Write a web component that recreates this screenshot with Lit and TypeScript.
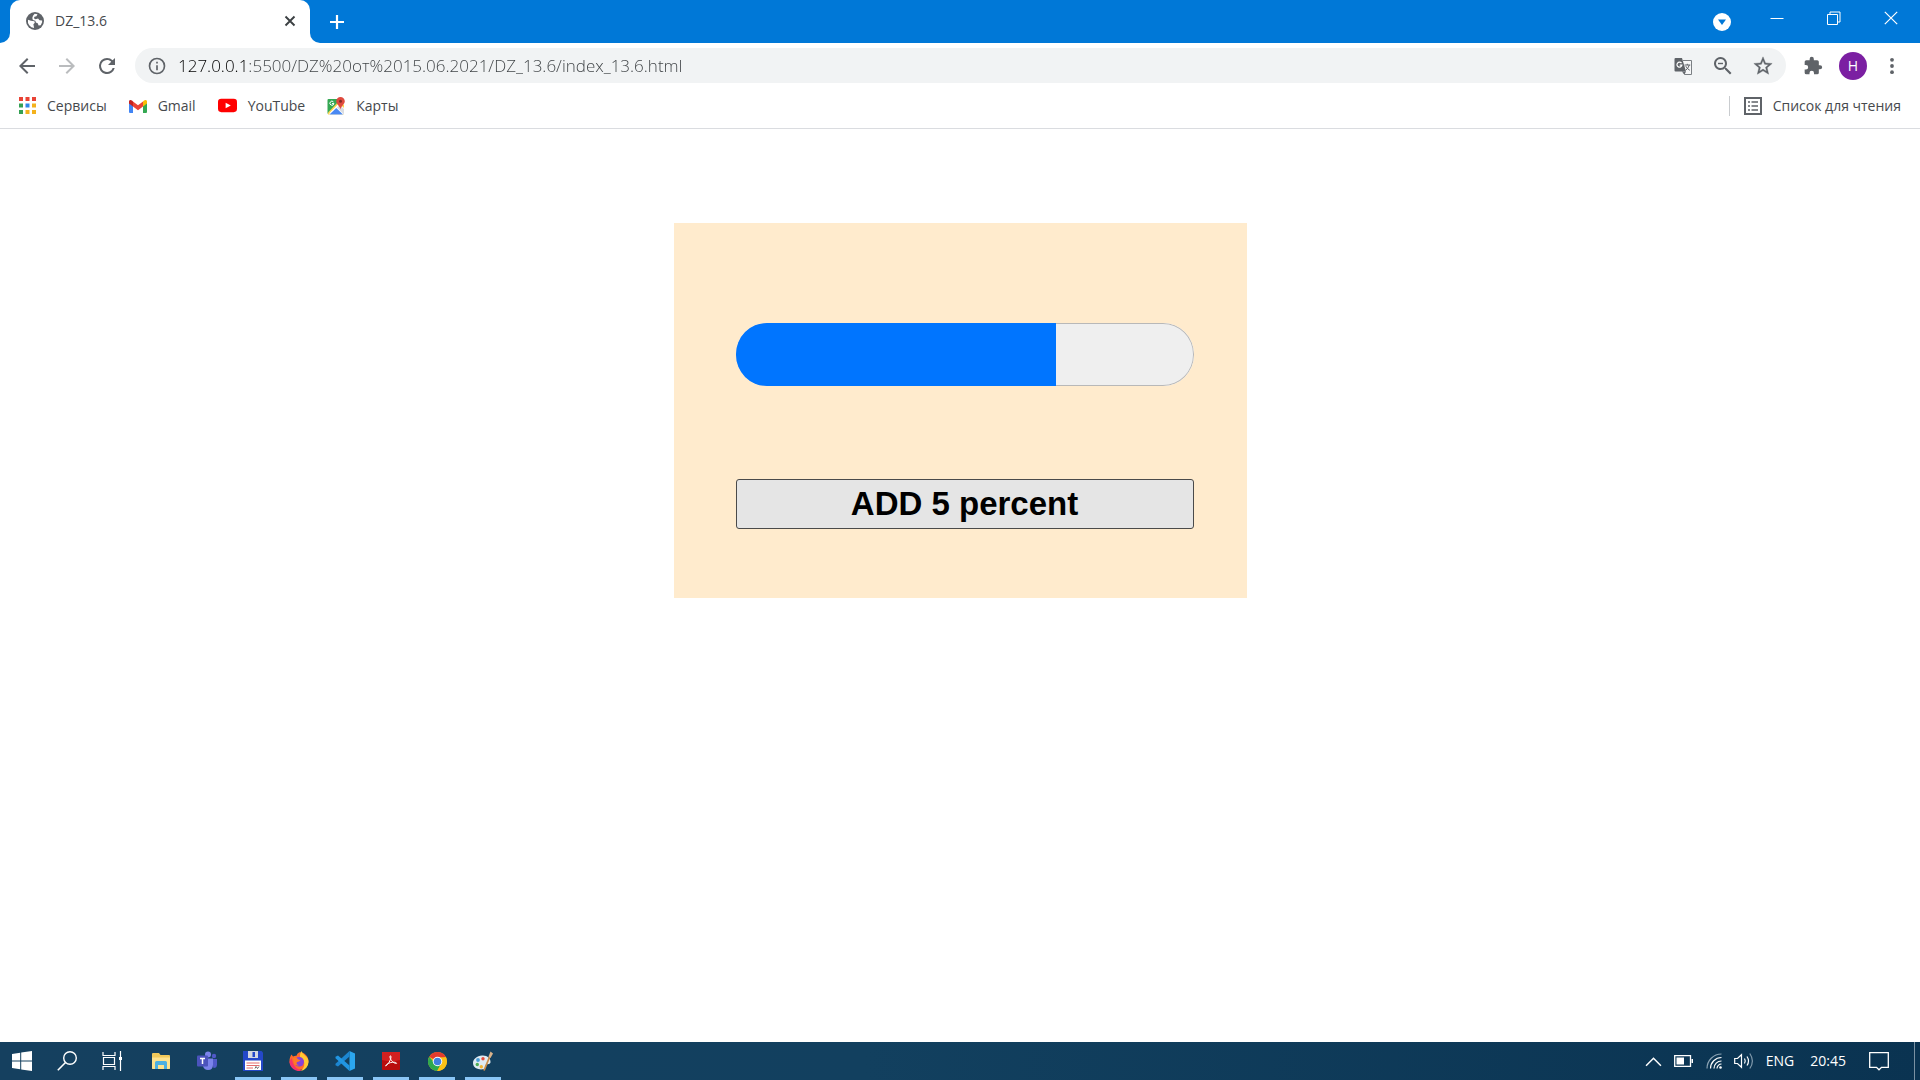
import { LitElement, html, css, svg, TemplateResult } from "lit";
import { customElement, state } from "lit/decorators.js";

const icon = (size: number, box: number, body: TemplateResult) =>
  html`<svg width=${size} height=${size} viewBox="0 0 ${box} ${box}" aria-hidden="true">${body}</svg>`;

const globe = svg`<circle cx="10" cy="10" r="10" fill="#5f6368"/>
  <path d="M2.200 8.500 5.500 9.600 9.300 10.400 9.800 12 8.200 13.600 9 17.900A8 8 0 0 1 2.200 8.500ZM9.600 2 12.800 2.600 11.600 4.600 9.400 5.200 8.800 7 10.600 8 13.400 7.200 15 9.200 17.900 9.400 17.900 11.400 16.400 14.800 14 15 13 12.600 11 11.800 10.400 9.800 7.600 9 7 6.800 7.800 4.200Z" fill="#fff"/>`;
const cross = svg`<path d="M1.500 1.500 10.500 10.500M10.500 1.500 1.500 10.500" stroke="#3c4043" stroke-width="1.900" fill="none"/>`;
const plus = svg`<path d="M8 1V15M1 8H15" stroke="#fff" stroke-width="2.200"/>`;
const back = svg`<path d="M20 11H7.830l5.590-5.590L12 4l-8 8 8 8 1.410-1.410L7.830 13H20v-2z" fill="#5f6368"/>`;
const forward = svg`<path d="M12 4l-1.410 1.410L16.170 11H4v2h12.170l-5.580 5.590L12 20l8-8z" fill="#babcbe"/>`;
const reload = svg`<path d="M17.650 6.350A7.960 7.960 0 0 0 12 4a8 8 0 1 0 7.730 10h-2.080A6 6 0 1 1 12 6c1.660 0 3.140.690 4.220 1.780L13 11h7V4l-2.350 2.350z" fill="#5f6368"/>`;
const info = svg`<path d="M11 17h2v-6h-2v6zm0-8h2V7h-2v2zm1-7a10 10 0 1 0 0 20 10 10 0 0 0 0-20zm0 18a8 8 0 1 1 0-16 8 8 0 0 1 0 16z" fill="#5f6368"/>`;
const translate = svg`<path d="M9 3.500H17.500V17.500H10.500L8.500 14.500" fill="#f6f7f8" stroke="#7b7f83" stroke-width="1"/>
  <path d="M1.500 1H8L12 14.500H1.500Q.5 14.500.5 13.500V2Q.5 1 1.500 1Z" fill="#5f6368"/><path d="M8.500 14.500H12L10.500 17.500Z" fill="#5f6368"/>
  <path d="M7.500 6.200A2.500 2.500 0 1 0 7.900 8.200H5.700" fill="none" stroke="#fff" stroke-width="1.200"/>
  <path d="M10.500 8H16.300M13.300 6.800V8M15.300 8Q14.500 11 11.800 13.200M11.800 9.200Q13 11.700 15.800 13.300" fill="none" stroke="#5f6368" stroke-width="1"/>`;
const zoomOut = svg`<path d="M15.500 14h-.790l-.280-.270A6.500 6.500 0 1 0 13.730 14.430l.270.280v.790l5 4.990L20.490 19l-4.990-5zM9.500 14a4.500 4.500 0 1 1 0-9 4.500 4.500 0 0 1 0 9z" fill="#5f6368"/><path d="M7 8.800H12V10.200H7Z" fill="#5f6368"/>`;
const star = svg`<path d="M22 9.240l-7.190-.620L12 2 9.190 8.630 2 9.240l5.460 4.730L5.820 21 12 17.270 18.180 21l-1.630-7.030L22 9.240zM12 15.400l-3.760 2.270 1-4.280-3.320-2.880 4.380-.380L12 6.100l1.710 4.040 4.380.380-3.320 2.880 1 4.280L12 15.400z" fill="#5f6368" stroke="#5f6368" stroke-width=".4"/>`;
const puzzle = svg`<path d="M20.500 11H19V7a2 2 0 0 0-2-2h-4V3.500a2.500 2.500 0 0 0-5 0V5H4a2 2 0 0 0-1.990 2v3.800H3.500a2.700 2.700 0 0 1 0 5.400H2V20a2 2 0 0 0 2 2h3.800v-1.500a2.700 2.700 0 0 1 5.400 0V22H17a2 2 0 0 0 2-2v-4h1.500a2.500 2.500 0 0 0 0-5z" fill="#5f6368"/>`;
const dots = svg`<g fill="#5f6368"><circle cx="10" cy="3.800" r="1.900"/><circle cx="10" cy="10" r="1.900"/><circle cx="10" cy="16.200" r="1.900"/></g>`;
const guest = svg`<circle cx="9" cy="9" r="9" fill="#fff"/><path d="M5 6.500H13L9 12Z" fill="#0078d7"/>`;
const minimize = svg`<path d="M.5 7.500H13.500" stroke="#fff"/>`;
const restore = svg`<path d="M.5 3.500H10.500V13.500H.5ZM3 3.500V1H13V11H10.500" fill="none" stroke="#fff"/>`;
const closeWin = svg`<path d="M.8.8 13.200 13.200M13.200.8.8 13.200" stroke="#fff" stroke-width="1.200"/>`;
const apps = svg`<path d="M0 0H4V4H0ZM6.500 0H10.500V4H6.500ZM13 0H17V4H13Z" fill="#e94335"/><path d="M0 6.500H4V10.500H0ZM0 13H4V17H0Z" fill="#34a053"/><path d="M6.500 6.500H10.500V10.500H6.500Z" fill="#2f87e8"/><path d="M13 6.500H17V10.500H13ZM6.500 13H10.500V17H6.500ZM13 13H17V17H13Z" fill="#f4b21c"/>`;
const gmail = svg`<path d="M0 5V15Q0 16 1 16H4V8Z" fill="#4285f4"/><path d="M18 5V15Q18 16 17 16H14V8Z" fill="#34a853"/><path d="M4 4.500 9 8.300 14 4.500V9.500L9 13.200 4 9.500Z" fill="#ea4335"/><path d="M0 6V4.500C0 2.700 1.800 2.500 3 3.600L4 4.500V9.500L0 6.500Z" fill="#c5221f"/><path d="M18 6.500V4.500C18 2.700 16.200 2.500 15 3.600L14 4.500V9.500Z" fill="#fbbc04"/>`;
const youtube = svg`<rect x="0" y="3" width="20" height="14" rx="3.500" fill="#f00"/><path d="M8 7 13.500 10 8 13Z" fill="#fff"/>`;
const maps = svg`<path d="M1.500 2H16V17H1.500Q.5 17 .5 16V3Q.5 2 1.500 2Z" fill="#34a853"/><path d="M1 15.500 12.500 3.500 17 8V17.500H1Z" fill="#fdd24b"/><path d="M2.500 16 12 6.300 17 11V17.500H2.500Z" fill="#fff"/><path d="M10 10.500 12.500 8 17 12V17.500Z" fill="#dadce0"/><path d="M2.500 17.500 9.300 11 16 17.500Z" fill="#4a89f3"/><path d="M6.500 5A2 2 0 1 0 6.900 6.500H5" fill="none" stroke="#fff" stroke-width="1"/>
  <path d="M13.500 0A4.300 4.300 0 0 1 17.800 4.300C17.800 7.300 14.300 8.500 13.500 12.500 12.700 8.500 9.200 7.300 9.200 4.300A4.300 4.300 0 0 1 13.500 0Z" fill="#df4a3e"/><circle cx="13.500" cy="4.200" r="1.500" fill="#822b26"/>`;
const reading = svg`<rect x="1" y="1" width="16" height="16" fill="none" stroke="#5f6368" stroke-width="2"/><path d="M4 5H6M4 9H6M4 13H6M7.500 5H14M7.500 9H14M7.500 13H14" stroke="#5f6368" stroke-width="1.700"/>`;

const windows = svg`<path d="M0 2.900 8.200 1.800V9.500H0ZM9.200 1.600 20 0V9.500H9.200ZM0 10.500H8.200V18.200L0 17.100ZM9.200 10.500H20V20L9.200 18.400Z" fill="#fff"/>`;
const search = svg`<circle cx="13" cy="7" r="6.300" fill="none" stroke="#fff" stroke-width="1.400"/><path d="M8.500 11.500.8 19.300" stroke="#fff" stroke-width="1.600"/>`;
const taskView = svg`<path d="M1 1V4.500H13V1M1 19V15.500H13V19M1.500 6.500H12.500V13.500H1.500ZM18.500 0V20" fill="none" stroke="#fff" stroke-width="1.200"/><path d="M17 6H20V9H17Z" fill="#fff"/>`;
const explorer = svg`<path d="M1 3Q1 2 2 2H8L9.500 4H18Q19 4 19 5V17Q19 18 18 18H2Q1 18 1 17Z" fill="#f1c95b"/><path d="M1 6.500H19V17Q19 18 18 18H2Q1 18 1 17Z" fill="#fde28e"/><path d="M4 18V11.500Q4 10 5.500 10H14.500Q16 10 16 11.500V18H13V14H7V18Z" fill="#4cb0e2"/>`;
const teams = svg`<circle cx="17" cy="5" r="2.200" fill="#5059c9"/><circle cx="11" cy="3.500" r="3" fill="#7b83eb"/><path d="M14 8H20V13.500Q20 17 16.500 17Z" fill="#5059c9"/><path d="M7 7.500H16V13.500Q16 19 11 19 7 19 6 15Z" fill="#7b83eb"/><rect x="0" y="4.500" width="11" height="11" rx="1" fill="#4b53bc"/><path d="M3 7.500H8M5.500 7.500V13" stroke="#fff" stroke-width="1.500"/>`;
const floppy = svg`<path d="M0 0H18.500L20 1.500V20H0Z" fill="#2448c9"/><path d="M5 0H15V7H5Z" fill="#d4d8e0"/><path d="M9.500 1H12V6H9.500Z" fill="#2448c9"/><path d="M2 9.500H18V19H2Z" fill="#fff"/><path d="M3.500 12H16.500M3.500 14.500H16.500M3.500 17H10" stroke="#e26d6d" stroke-width="1"/><path d="M12 17.500 13 15.500 14.500 17.500 16 15.500" stroke="#444" stroke-width=".8" fill="none"/>`;
const firefox = svg`<path d="M10 1.500C14 0 20 5 19.500 11A9.600 9.300 0 0 1 .5 11C.3 7.500 1.500 5 2.500 3.500L4 5.500Q6 4.500 7.500 4.800 8 2.500 10 1.500Z" fill="#ff6a2b"/><path d="M12.500 0Q13 2.500 16 4.500C18.500 6.500 19.500 8 19.500 11A9.600 9.300 0 0 1 12 20Q17 15 14.500 9 13 6.500 11 6Q10.500 3 12.500 0Z" fill="#ffc931"/><path d="M.5 11A9.600 9.300 0 0 0 13 19.600Q6 18 4 12L2.500 7Z" fill="#f5326b"/><circle cx="10.200" cy="10.800" r="4.800" fill="#8542d8"/><path d="M4 7Q7 5.500 9.500 8.500L11.500 9Q10.500 11 8 11 6.500 13.500 10 14 7 15.500 5 12.500Z" fill="#ff7a25"/>`;
const vscode = svg`<path d="M14.500 0 20 2.500V17.500L14.500 20Z" fill="#2ba7f0"/><path d="M14.500 0V5.500L3 15.500.5 14.200V12.800Z" fill="#1c86d1"/><path d="M14.500 20V14.500L3 4.500.5 5.800V7.200Z" fill="#2196e3"/>`;
const acrobat = svg`<rect width="20" height="20" rx="1" fill="#b90d0d"/><path d="M0 0H20V9Q10 12 0 9Z" fill="#d32020"/><path d="M4 15.500C6.500 14.500 9.800 9 10 5.500 10 3.800 8.600 3.800 8.800 5.500 9.200 9 13 12.800 16 12.800 17 12 14 11 11.500 11.400 8.500 11.800 5 13 4 15.500Z" fill="none" stroke="#fff" stroke-width="1.100"/>`;
const chrome = svg`<circle cx="10" cy="10" r="10" fill="#fbc116"/><path d="M10 10 1.340 5A10 10 0 0 1 18.660 5Z" fill="#e33b2e"/><path d="M10 10H5.500L1.340 5A10 10 0 0 0 9.500 20L14 12Z" fill="#2da94f"/><path d="M10 5.500H18.900A10 10 0 0 1 10 20L14 12Z" fill="#fbc116"/><circle cx="10" cy="10" r="5" fill="#fff"/><circle cx="10" cy="10" r="4" fill="#3f7fe0"/>`;
const paint = svg`<path d="M9 4.500C14 4 18 7.500 17.500 11.500 17 13.500 15 13 13.500 13.300 12 14 13.500 16 12 17.500 9 19.500 0 18.500 0 12 0 8 4 5 9 4.500Z" fill="#e0ebf2"/><circle cx="5" cy="9" r="1.900" fill="#4c9fd8"/><circle cx="4.300" cy="13.500" r="1.700" fill="#4fae54"/><circle cx="10" cy="7.800" r="1.700" fill="#e44b3a"/><circle cx="8.300" cy="15.800" r="1.700" fill="#f0b330"/><path d="M17 5 11 19.500" stroke="#c98d4b" stroke-width="1.800"/><path d="M15.500 5.500 17.500.5 20 2.500 17.500 7Z" fill="#d9b28a"/>`;

const chevron = svg`<path d="M1 12 8 5 15 12" fill="none" stroke="#fff" stroke-width="1.400"/>`;
const battery = svg`<path d="M.7 4.700H16.500V15.300H.7Z" fill="none" stroke="#fff" stroke-width="1.300"/><path d="M2.500 6.500H10V13.500H2.500ZM17.500 8H19V12H17.500Z" fill="#fff"/>`;
const wifi = svg`<g fill="none" stroke-width="1.200"><path d="M1 15.500A14.500 14.500 0 0 1 15.500 1" stroke="#8ba3b4"/><path d="M4.500 15.500A11 11 0 0 1 15.500 4.500M8 15.500A7.500 7.500 0 0 1 15.500 8M11 15.500A4.500 4.500 0 0 1 15.500 11" stroke="#fff"/></g><circle cx="14.500" cy="14.500" r="1.300" fill="#fff"/>`;
const volume = svg`<g fill="none" stroke="#fff" stroke-width="1.200"><path d="M.7 7.500H3.500L7.500 3.700V16.300L3.500 12.500H.7Z"/><path d="M10.500 7.500Q12 10 10.500 12.500M13 5.500Q16 10 13 14.500"/><path d="M15.800 2.500Q21 10 15.800 17.500" stroke="#8099ab"/></g>`;
const notice = svg`<path d="M.7 1.700H19.300V16.300H12.500L10 18.800 7.500 16.300H.7Z" fill="none" stroke="#fff" stroke-width="1.300"/>`;

@customElement("progress-card")
export class ProgressCard extends LitElement {
  @state() private value = 70;

  static styles = css`
    :host { display: block; }
    .card {
      box-sizing: border-box;
      display: grid;
      row-gap: 93px;
      max-width: 573px;
      margin: 0 auto;
      padding: 100px 53px 69px 62px;
      background: #ffebcd;
    }
    .meter {
      appearance: none;
      box-sizing: border-box;
      display: block;
      width: 100%;
      height: 63px;
      border: 0;
      border-radius: 31px;
      overflow: hidden;
      background: #efefef;
    }
    .meter::-webkit-progress-bar { background: #efefef; border-radius: 31px; box-shadow: inset 0 0 0 1px #b8b8b8; }
    .meter::-webkit-progress-value { background: #0075ff; }
    .add {
      box-sizing: border-box;
      width: 100%;
      height: 50px;
      padding: 0;
      border: 1px solid #4a4a4a;
      border-radius: 3px;
      background: #e5e5e5;
      color: #000;
      font: bold 33px/38px "Liberation Sans", Arial, sans-serif;
    }
  `;

  private add() {
    this.value = Math.min(100, this.value + 5);
  }

  render() {
    return html`<section class="card">
      <progress class="meter" max="100" .value=${this.value} aria-label="percent"></progress>
      <button class="add" @click=${this.add}>ADD 5 percent</button>
    </section>`;
  }
}

@customElement("browser-chrome")
export class BrowserChrome extends LitElement {
  static styles = css`
    :host { display: block; color: #46494d; font: 14px/20px "Open Sans", "Noto Sans", sans-serif; }
    button, a { display: flex; align-items: center; justify-content: center; padding: 0; border: 0; background: none; color: inherit; font: inherit; text-decoration: none; }
    svg { display: block; flex: none; }
    .titlebar { display: flex; height: 43px; }
    .lead { width: 10px; background: #0078d7; border-bottom-right-radius: 10px; }
    .tab-back { background: #0078d7; flex: 0 1 300px; display: flex; margin-bottom: 10px; }
    .tab { flex: 1; display: flex; align-items: center; padding: 8px 11px 0 16px; gap: 11px; background: #fff; border-radius: 10px 10px 0 0; }
    .tab-title { flex: 1; }
    .tab-close { width: 18px; height: 20px; }
    .strip { flex: 1; display: flex; align-items: center; background: #0078d7; border-bottom-left-radius: 10px; }
    .new-tab { width: 54px; height: 43px; }
    .windowing { margin-left: auto; display: flex; align-items: center; padding-right: 1px; }
    .guest { width: 52px; height: 43px; }
    .win { width: 57px; height: 36px; align-self: flex-start; }
    .toolbar { display: flex; align-items: center; height: 45px; padding: 0 8px 0 7px; }
    .tool { width: 40px; height: 35px; }
    .omnibox { flex: 1; display: flex; align-items: center; height: 35px; margin: 0 7px 0 8px; padding-right: 3px; border-radius: 18px; background: #f1f3f4; }
    .info { width: 43px; height: 35px; }
    .url {
      flex: 1; min-width: 0; height: 35px; padding: 0; border: 0; outline: 0;
      font: 300 17px/24px "Open Sans", "Noto Sans", sans-serif;
      color: transparent;
      background: linear-gradient(90deg, #000 67px, #3c4043 67px);
      -webkit-background-clip: text; background-clip: text;
    }
    .avatar { width: 28px; height: 28px; margin: 0 5px 0 6px; border-radius: 50%; background: #7b1fa2; color: #fff; }
    .bookmarks { display: flex; align-items: center; height: 35px; padding: 0 19px 5px; border-bottom: 1px solid #dadce0; gap: 22px; }
    .mark { gap: 11px; height: 28px; }
    .reading { margin-left: auto; padding-left: 14px; height: 20px; border-left: 1px solid #c9cccf; }
  `;

  render() {
    return html`
      <header>
        <div class="titlebar">
          <div class="lead"></div>
          <div class="tab-back"><div class="tab">
            ${icon(18, 20, globe)}<span class="tab-title">DZ_13.6</span>
            <button class="tab-close" aria-label="Close tab">${icon(12, 12, cross)}</button>
          </div></div>
          <div class="strip">
            <button class="new-tab" aria-label="New tab">${icon(16, 16, plus)}</button>
            <div class="windowing">
              <button class="guest" aria-label="Search tabs">${icon(18, 18, guest)}</button>
              <button class="win" aria-label="Minimize">${icon(14, 14, minimize)}</button>
              <button class="win" aria-label="Restore">${icon(14, 14, restore)}</button>
              <button class="win" aria-label="Close">${icon(14, 14, closeWin)}</button>
            </div>
          </div>
        </div>
        <div class="toolbar">
          <button class="tool" aria-label="Back">${icon(24, 24, back)}</button>
          <button class="tool" aria-label="Forward">${icon(24, 24, forward)}</button>
          <button class="tool" aria-label="Reload">${icon(24, 24, reload)}</button>
          <div class="omnibox">
            <button class="info" aria-label="Site information">${icon(20, 24, info)}</button>
            <input class="url" aria-label="Address" spellcheck="false" value="127.0.0.1:5500/DZ%20от%2015.06.2021/DZ_13.6/index_13.6.html">
            <button class="tool" aria-label="Translate">${icon(18, 18, translate)}</button>
            <button class="tool" aria-label="Zoom">${icon(24, 24, zoomOut)}</button>
            <button class="tool" aria-label="Bookmark">${icon(22, 24, star)}</button>
          </div>
          <button class="tool" aria-label="Extensions">${icon(20, 24, puzzle)}</button>
          <button class="avatar" aria-label="Profile">Н</button>
          <button class="tool" aria-label="Menu">${icon(20, 20, dots)}</button>
        </div>
        <nav class="bookmarks">
          <a class="mark" href="#">${icon(17, 17, apps)}Сервисы</a>
          <a class="mark" href="#">${icon(18, 18, gmail)}Gmail</a>
          <a class="mark" href="#">${icon(19, 20, youtube)}YouTube</a>
          <a class="mark" href="#">${icon(18, 18, maps)}Карты</a>
          <button class="mark reading">${icon(18, 18, reading)}Список для чтения</button>
        </nav>
      </header>`;
  }
}

interface TaskItem { name: string; art: TemplateResult; size: number; open: boolean; }

@customElement("task-bar")
export class TaskBar extends LitElement {
  private system: TaskItem[] = [
    { name: "Start", art: windows, size: 20, open: false },
    { name: "Search", art: search, size: 20, open: false },
    { name: "Task view", art: taskView, size: 20, open: false },
  ];
  private programs: TaskItem[] = [
    { name: "Explorer", art: explorer, size: 20, open: false },
    { name: "Teams", art: teams, size: 20, open: false },
    { name: "Total Commander", art: floppy, size: 20, open: true },
    { name: "Firefox", art: firefox, size: 20, open: true },
    { name: "Code", art: vscode, size: 20, open: true },
    { name: "Acrobat", art: acrobat, size: 18, open: true },
    { name: "Chrome", art: chrome, size: 19, open: true },
    { name: "Paint", art: paint, size: 20, open: true },
  ];

  static styles = css`
    :host { display: block; color: #fff; font: 14px/20px "Open Sans", "Noto Sans", sans-serif; }
    button { display: flex; align-items: center; justify-content: center; padding: 0; border: 0; background: none; color: inherit; font: inherit; }
    svg { display: block; flex: none; }
    .bar { display: flex; height: 38px; background: linear-gradient(90deg, #15405f, #12405f 45%, #0a3351); }
    .group { display: flex; }
    .system { width: 45px; }
    .system-group { padding-right: 4px; margin-left: -1px; }
    .program { box-sizing: border-box; width: 36px; margin: 0 5px; padding-top: 3px; border-bottom: 3px solid transparent; }
    .open { border-bottom-color: #8ac6f5; }
    .tray { margin-left: auto; display: flex; align-items: center; gap: 12px; }
    .tray button { height: 38px; }
    .clock { padding: 0 11px 0 4px; }
    .notice { margin-right: 25px; }
    .desktop { width: 6px; border-left: 1px solid #7a91a2; }
  `;

  render() {
    return html`<footer class="bar">
      <div class="group system-group">${this.system.map((s) => html`<button class="system" aria-label=${s.name}>${icon(s.size, 20, s.art)}</button>`)}</div>
      <div class="group">${this.programs.map((p) => html`<button class="program ${p.open ? "open" : ""}" aria-label=${p.name}>${icon(p.size, 20, p.art)}</button>`)}</div>
      <div class="tray">
        <button aria-label="Hidden icons">${icon(17, 16, chevron)}</button>
        <button aria-label="Battery">${icon(20, 20, battery)}</button>
        <button aria-label="Network">${icon(16, 16, wifi)}</button>
        <button aria-label="Volume">${icon(20, 20, volume)}</button>
        <button>ENG</button>
        <time class="clock">20:45</time>
        <button class="notice" aria-label="Notifications">${icon(20, 20, notice)}</button>
      </div>
      <button class="desktop" aria-label="Show desktop"></button>
    </footer>`;
  }
}

@customElement("app-root")
export class AppRoot extends LitElement {
  static styles = css`
    :host { display: flex; flex-direction: column; min-height: 100vh; background: #fff; }
    .page { flex: 1; padding: 94px 0; }
  `;

  render() {
    return html`
      <browser-chrome></browser-chrome>
      <main class="page"><progress-card></progress-card></main>
      <task-bar></task-bar>`;
  }
}
